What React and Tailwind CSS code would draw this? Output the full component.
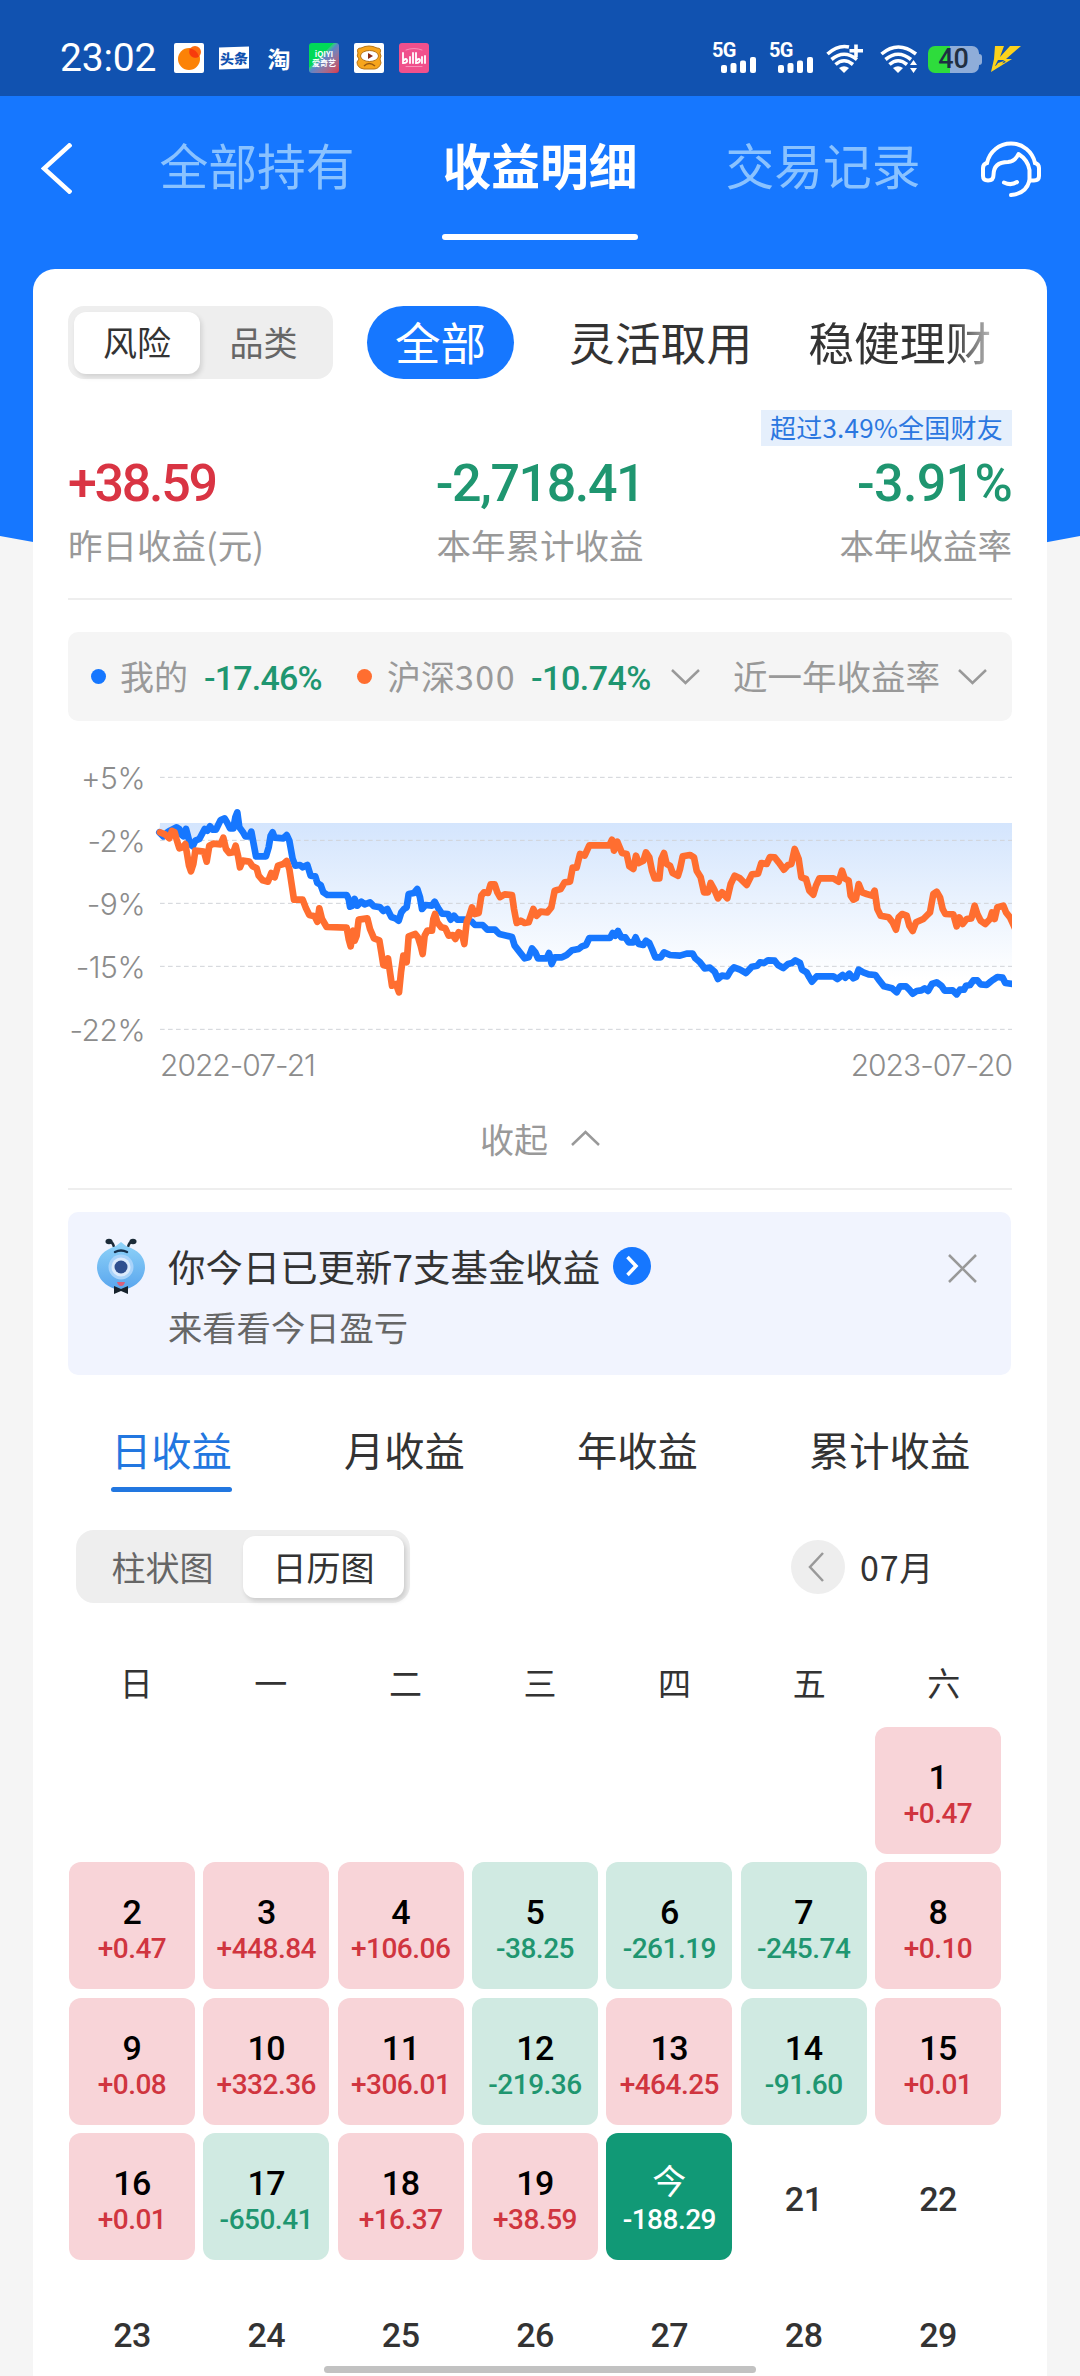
// ============================================================
//  App.jsx — fund earnings detail page (mobile)
// ============================================================
import React from 'react';

const TABS = ['全部持有', '收益明细', '交易记录'];

const Y_TICKS = ['+5%', '-2%', '-9%', '-15%', '-22%'];

const WEEKDAYS = ['日', '一', '二', '三', '四', '五', '六'];

// one entry per calendar cell, null = empty cell
const DAYS = [
  null, null, null, null, null, null, { d: 1, v: '+0.47' },
  { d: 2, v: '+0.47' }, { d: 3, v: '+448.84' }, { d: 4, v: '+106.06' }, { d: 5, v: '-38.25' },
  { d: 6, v: '-261.19' }, { d: 7, v: '-245.74' }, { d: 8, v: '+0.10' },
  { d: 9, v: '+0.08' }, { d: 10, v: '+332.36' }, { d: 11, v: '+306.01' }, { d: 12, v: '-219.36' },
  { d: 13, v: '+464.25' }, { d: 14, v: '-91.60' }, { d: 15, v: '+0.01' },
  { d: 16, v: '+0.01' }, { d: 17, v: '-650.41' }, { d: 18, v: '+16.37' }, { d: 19, v: '+38.59' },
  { d: '今', v: '-188.29', today: true }, { d: 21 }, { d: 22 },
  { d: 23 }, { d: 24 }, { d: 25 }, { d: 26 }, { d: 27 }, { d: 28 }, { d: 29 },
];

// chart series, viewBox units (3 per pixel)
const MINE =
  '-2,250 10,262 22,250 30,245 40,240 50,235 58,240 62,255 70,262 78,240 84,262 90,285 98,292 106,275 118,270 126,255 134,240 142,245 150,232 158,242 168,242 176,225 182,213 194,208 202,222 210,238 220,238 226,205 232,190 238,235 248,248 256,262 268,262 274,248 280,280 288,322 318,322 326,295 332,260 338,250 344,266 370,268 380,258 388,275 398,330 406,350 420,348 428,355 442,348 452,380 466,382 472,402 482,408 490,430 502,438 560,438 566,450 570,473 578,470 584,450 592,470 604,458 614,466 630,460 642,472 660,475 670,486 682,480 694,504 706,508 716,515 724,490 732,480 740,475 746,435 762,432 772,420 780,445 786,480 796,468 816,470 824,458 836,480 846,494 864,495 872,512 882,500 892,512 915,512 935,518 945,528 968,528 982,542 1005,542 1018,555 1040,560 1056,564 1064,590 1078,608 1094,628 1106,625 1116,598 1126,610 1134,628 1160,628 1167,612 1175,645 1184,625 1206,625 1220,618 1236,604 1256,600 1266,592 1278,588 1288,567 1350,567 1358,552 1366,560 1374,546 1384,565 1396,565 1406,580 1420,580 1427,565 1436,585 1450,588 1458,575 1468,582 1476,600 1486,625 1502,625 1512,610 1530,618 1560,620 1580,614 1598,614 1606,628 1620,640 1634,658 1650,656 1664,668 1674,690 1686,680 1702,682 1712,665 1722,655 1740,662 1758,672 1776,653 1792,650 1800,640 1812,642 1824,634 1844,635 1854,648 1870,657 1884,645 1896,642 1906,634 1920,642 1926,662 1940,670 1948,685 1956,698 1970,682 2020,682 2032,690 2048,678 2056,686 2068,674 2080,688 2088,684 2096,662 2110,670 2126,676 2146,678 2156,692 2172,712 2196,718 2210,730 2220,712 2238,712 2248,722 2258,734 2270,726 2284,724 2294,718 2304,726 2316,705 2330,700 2344,710 2354,725 2378,724 2390,736 2400,722 2412,722 2418,710 2430,708 2440,694 2452,694 2462,706 2480,708 2492,698 2500,692 2512,684 2528,686 2536,702 2570,706';

const CSI300 =
  '0,250 15,256 28,268 36,246 44,250 50,272 58,298 68,295 76,285 82,320 87,350 93,367 100,345 106,305 132,308 140,338 148,290 160,284 182,286 190,266 198,300 208,312 220,310 227,290 234,320 240,355 248,335 268,338 278,352 290,358 296,380 308,394 324,398 334,372 344,385 354,350 370,345 380,336 388,360 394,400 402,452 428,452 438,478 448,498 464,502 472,518 478,478 486,510 500,534 560,536 566,570 572,592 580,545 584,575 590,560 596,512 622,508 630,540 642,568 658,574 664,610 670,648 676,650 684,628 690,670 696,710 708,705 717,730 723,670 730,620 740,640 746,562 766,555 774,565 782,590 788,615 794,560 802,545 816,545 820,510 825,495 832,520 844,535 856,538 866,560 878,558 886,570 896,550 906,555 913,585 920,520 928,500 936,475 944,495 956,492 964,440 972,430 984,432 992,406 1004,406 1012,430 1020,444 1034,436 1056,438 1062,480 1070,522 1082,515 1094,522 1106,520 1120,480 1130,500 1142,488 1162,490 1174,475 1184,425 1202,420 1214,400 1230,398 1238,356 1250,356 1260,315 1274,320 1288,289 1348,289 1356,272 1362,305 1372,278 1386,312 1400,315 1408,352 1420,360 1428,320 1436,342 1450,335 1458,310 1468,325 1476,365 1484,388 1498,388 1504,330 1512,312 1520,345 1530,350 1538,372 1554,380 1560,360 1568,322 1590,318 1602,325 1610,365 1622,385 1632,430 1644,430 1652,402 1662,420 1674,448 1686,430 1702,448 1712,405 1724,380 1740,388 1760,408 1776,376 1794,374 1804,342 1820,345 1830,324 1844,325 1856,340 1872,362 1884,348 1894,345 1904,300 1916,330 1924,385 1938,390 1948,425 1960,437 1968,410 1978,388 2020,388 2036,398 2046,365 2054,388 2066,395 2072,440 2080,452 2088,448 2096,405 2106,430 2120,435 2136,440 2144,425 2152,480 2162,500 2186,505 2198,520 2208,542 2216,505 2226,495 2240,500 2248,530 2258,546 2268,520 2290,510 2302,498 2310,490 2320,435 2330,428 2340,445 2348,480 2356,495 2380,496 2390,532 2398,505 2408,525 2420,510 2434,508 2444,470 2452,495 2462,515 2476,525 2490,510 2496,490 2504,510 2512,475 2530,470 2538,490 2550,505 2566,540';

export default function App() {
  return (
    <div className="relative w-[1080px] h-[2376px] overflow-hidden bg-[#f5f5f5] font-['Noto_Sans_CJK_SC',sans-serif] text-[#333]">
      {/* curved blue backdrop */}
      <svg className="absolute left-0 top-0" width="1080" height="600" viewBox="0 0 1080 600">
        <path d="M0 0H1080V536Q540 640 0 536Z" fill="#1677ff" />
      </svg>
      <div className="relative flex flex-col">
        <StatusBar />
        <NavBar />
        <main className="mx-[33px] h-[2107px] rounded-t-[22px] bg-white px-[35px] pt-[37px]">
          <Filters />
          <Stats />
          <Legend />
          <Chart />
          <div className="flex h-[105px] items-center justify-center gap-[23px] border-b-2 border-[#eee] pt-[3px] text-[34px] text-[#999]">
            收起
            <Chevron up />
          </div>
          <Notice />
          <PeriodTabs />
          <Calendar />
        </main>
      </div>
      {/* home indicator */}
      <div className="absolute left-[324px] top-[2366px] h-[7px] w-[432px] rounded-full bg-[#c2c2c2]" />
    </div>
  );
}

function StatusBar() {
  return (
    <header className="flex h-[96px] items-start justify-between bg-[#1152b0] pl-[60px] pr-[59px] pt-[42px] text-white">
      <div className="flex h-[31px] items-center">
        <div className="w-[114px] pt-[2px] font-['Roboto',sans-serif] text-[39px] leading-[31px] tracking-[-0.2px]">23:02</div>
        <div className="flex items-center gap-[15px]">
          <svg width="30" height="30" viewBox="0 0 30 30">
            <rect width="30" height="30" rx="2" fill="#fff" />
            <circle cx="15" cy="16" r="11" fill="#fc8206" />
            <circle cx="21" cy="9" r="6" fill="#fb6b10" />
            <path d="M15.500 7.500A6 6 0 0 0 25 13.500A11 11 0 0 0 15.500 5.500Z" fill="#f73c0c" />
          </svg>
          <div className="flex h-[22px] w-[30px] -skew-y-2 items-center justify-center bg-white text-[14px] font-black leading-none text-[#1152b0]">
            头条
          </div>
          <div className="w-[30px] text-center text-[23px] font-bold leading-[28px]">淘</div>
          <div className="flex h-[30px] w-[30px] flex-col items-center justify-center rounded-[3px] bg-linear-to-br from-[#00d957] from-40% via-[#5a86c8] to-[#d8304a] text-[8px] font-bold leading-[9px]">
            <span>iQIYI</span>
            <span>爱奇艺</span>
          </div>
          <svg width="30" height="30" viewBox="0 0 30 30">
            <rect width="30" height="30" rx="2" fill="#fff" />
            <path d="M4 10Q2 5 7 5Q15 1 23 5Q28 5 26 10Q28 13 26 16L27 20Q25 26 20 26H10Q3 25 3 19L5 16Q2 13 4 10Z" fill="#f7a51c" stroke="#b87416" />
            <ellipse cx="15.500" cy="13" rx="9" ry="5.500" fill="#fff" stroke="#b87416" />
            <path d="M14 10L19 13L14 16Z" fill="#8a2c18" />
            <path d="M10 23Q15 18 21 23" fill="none" stroke="#9a5a10" strokeWidth="1.500" />
          </svg>
          <div className="flex h-[30px] w-[30px] items-center justify-center rounded-[3px] bg-[#f0508c]">
            <svg width="26" height="20" viewBox="0 0 26 20" fill="none" stroke="#fff" strokeWidth="1.800" strokeLinecap="round">
              <path d="M2 5V15Q7 15 6 12Q5 10 3 12M9 9V15M12 5V15M15 5V15Q19 15 19 12Q18 10 16 12M21 9V15M24 8V15" />
              <path d="M5 2Q13 -1 21 2M5 18.500H21" stroke="#f990b8" strokeWidth="1" />
            </svg>
          </div>
        </div>
      </div>
      <div className="flex h-[31px] items-start">
        <Signal />
        <Signal />
        <svg className="mt-[1px]" width="54" height="31" viewBox="0 0 54 31" fill="none" stroke="#fff" strokeWidth="3.600">
          <path d="M1.500 11Q12 1.500 23 4M5.500 16.500Q18 6 31 16.500M9.500 21.500Q18 14 27 21.500" />
          <path d="M13 25Q18 21.500 23 25L18 30Z" fill="#fff" stroke="none" />
          <path d="M30 1.500V14M23.500 7.700H37" />
        </svg>
        <svg className="mt-[1px]" width="48" height="31" viewBox="0 0 48 31" fill="none" stroke="#fff" strokeWidth="3.600">
          <path d="M1.500 11Q18 -3 36 11M5.500 16.500Q18 6 31 16.500M9.500 21.500Q18 14 27 21.500" />
          <path d="M13 25Q18 21.500 23 25L18 30Z" fill="#fff" stroke="none" />
          <path d="M30 22L33.500 17L37 22ZM30 25L33.500 30L37 25Z" fill="#fff" stroke="none" />
        </svg>
        <div className="mt-[4px] flex items-center">
          <div className="flex h-[27px] w-[51px] items-center justify-center rounded-[7px] bg-linear-to-r from-[#2edc3c] from-43% to-[#8fadd9] to-43% font-['Roboto',sans-serif] text-[27px] font-medium leading-none text-[#1f2f42]">
            40
          </div>
          <div className="h-[11px] w-[3px] rounded-r bg-[#8fadd9]" />
        </div>
        <svg className="ml-[9px] mt-[4px]" width="30" height="26" viewBox="0 0 30 26" fill="#fcd21c">
          <path d="M4 0H13L9 11L19 0H30L15 13H21L0 26L3 13Z" />
          <path d="M4 20L7 14H12L15 16Z" fill="#1152b0" />
          <path d="M2 24L7 17L13 15L10 19Z" fill="#fcd21c" />
        </svg>
      </div>
    </header>
  );
}

function Signal() {
  return (
    <div className="h-[31px] w-[57px]">
      <div className="h-[15px] font-['Roboto',sans-serif] text-[20px] font-bold leading-[17px] tracking-[-0.8px]">5G</div>
      <svg className="ml-[9px]" width="36" height="16" viewBox="0 0 36 16" fill="#fff">
        <rect x="0" y="8" width="6" height="8" rx="2" />
        <rect x="9.500" y="6" width="6" height="10" rx="2" />
        <rect x="19" y="3.500" width="6" height="12.500" rx="2" />
        <rect x="29" y="0" width="6" height="16" rx="2" />
      </svg>
    </div>
  );
}

function NavBar() {
  return (
    <nav className="flex h-[173px] items-start pl-[41px] pt-[45px] text-white">
      <svg className="mt-[2px]" width="31" height="51" viewBox="0 0 31 51" fill="none" stroke="#fff" strokeWidth="4.500">
        <path d="M30 1L3 25.500L30 50" />
      </svg>
      <div className="flex pl-[87px]">
        {TABS.map((t, i) => (
          <div key={t} className={i === 1 ? 'mx-[87px] flex w-[196px] flex-col items-center font-bold' : 'flex w-[196px] flex-col items-center text-[#8ac2ff]'}>
            <span className="h-[93px] whitespace-nowrap text-[48.8px] leading-[46px]">{t}</span>
            {i === 1 && <span className="h-[6px] w-[196px] rounded-full bg-white" />}
          </div>
        ))}
      </div>
      <svg className="ml-[60px] mt-[-1px]" width="60" height="58" viewBox="0 0 60 58" fill="none" stroke="#fff" strokeWidth="4" strokeLinecap="round" strokeLinejoin="round">
        <path d="M6 23A24.500 24.500 0 0 1 54 23" />
        <path d="M6 23Q2 24 2 28V36Q2 40.500 7 40.500Q12.500 40.500 12.500 35Q12.500 22 27 22Q34 21.500 37.500 14Q47 20 48.500 30V40.500H53Q58 40.500 58 36V28Q58 24 54 23" />
        <path d="M48.500 40.500Q45 54 30 55" />
        <path d="M23 42.500Q30 46 36 42" />
      </svg>
    </nav>
  );
}

function Filters() {
  return (
    <div className="flex h-[73px] items-center">
      <div className="flex h-[73px] w-[265px] flex-shrink-0 items-center rounded-[16px] bg-[#eee] p-[6px] text-[34px] leading-[50px]">
        <div className="flex h-[62px] w-[126px] items-center justify-center rounded-[12px] bg-white pb-[2px] shadow-[2px_3px_5px_rgba(0,0,0,0.12)]">风险</div>
        <div className="flex-1 pb-[2px] text-center text-[#666]">品类</div>
      </div>
      <div className="ml-[34px] flex h-[73px] w-[147px] flex-shrink-0 items-center justify-center rounded-full bg-[#1677ff] pb-[3px] text-[45.500px] text-white">全部</div>
      <div className="ml-[55px] flex-shrink-0 pb-[3px] text-[45.800px]">灵活取用</div>
      <div className="ml-[56px] flex-shrink-0 bg-linear-to-r from-[#333] from-78% to-[#bbb] bg-clip-text pb-[3px] text-[45.800px] text-transparent">稳健理财</div>
    </div>
  );
}

function Stats() {
  return (
    <div className="h-[221px] border-b-2 border-[#eee] pt-[31px]">
      <div className="flex h-[36px] justify-end">
        <span className="h-[36px] w-[251px] whitespace-nowrap bg-[#e5effc] text-center text-[26px] leading-[34px] tracking-[0.25px] text-[#2b77e0]">超过3.49%全国财友</span>
      </div>
      <div className="grid h-[72px] grid-cols-3 items-center pt-[3px] font-['Roboto',sans-serif] text-[52px] font-medium leading-[69px]">
        <span className="tracking-[-2.300px] text-[#d93443]">+38.59</span>
        <span className="text-center tracking-[-1.400px] text-[#1f9670]">-2,718.41</span>
        <span className="text-right tracking-[-0.700px] text-[#1f9670]">-3.91%</span>
      </div>
      <div className="grid h-[56px] grid-cols-3 items-center pb-[2px] text-[34.500px] text-[#999]">
        <span>昨日收益(元)</span>
        <span className="text-center">本年累计收益</span>
        <span className="text-right">本年收益率</span>
      </div>
    </div>
  );
}

function Legend() {
  return (
    <div className="mt-[32px] flex h-[89px] items-center rounded-[10px] bg-[#f5f5f5] pl-[23px] text-[34px] text-[#999]">
      <span className="h-[15px] w-[15px] rounded-full bg-[#1677ff]" />
      <span className="ml-[14px] pb-[2px]">我的</span>
      <span className="ml-[16px] w-[120px] pt-[4px] font-['Roboto',sans-serif] font-medium tracking-[-0.8px] text-[#1f9670]">-17.46%</span>
      <span className="ml-[33px] h-[15px] w-[15px] rounded-full bg-[#ff6e30]" />
      <span className="ml-[15px] flex w-[130px] whitespace-nowrap pb-[2px]">沪深<span className="tracking-[1.500px]">300</span></span>
      <span className="ml-[14px] w-[122px] pt-[4px] font-['Roboto',sans-serif] font-medium tracking-[-0.5px] text-[#1f9670]">-10.74%</span>
      <span className="ml-[18px]"><Chevron /></span>
      <span className="ml-[33px] w-[207px] whitespace-nowrap pb-[2px] text-[34.500px]">近一年收益率</span>
      <span className="ml-[18px]"><Chevron /></span>
    </div>
  );
}

function Chart() {
  return (
    <div className="mt-[25px] text-[#8c8c8c]">
      <div className="flex">
        <div className="flex w-[77px] flex-col whitespace-nowrap text-right font-['Inter',sans-serif] text-[30px] font-light leading-[65px] tracking-[-0.5px]">
          {Y_TICKS.map((t) => <span key={t} className="h-[63px]">{t}</span>)}
        </div>
        <svg className="ml-[10px]" width="857" height="315" viewBox="-15 -9 2571 945">
          <defs>
            <linearGradient id="fill" gradientUnits="userSpaceOnUse" x1="0" y1="222" x2="0" y2="690">
              <stop offset="0" stopColor="#d4e5fd" />
              <stop offset="1" stopColor="#fff" />
            </linearGradient>
          </defs>
          {/* area sits between the zero line and the blue series */}
          <polygon points={`0,222 ${MINE} 2570,222`} fill="url(#fill)" />
          <g stroke="#d0d3d8" strokeWidth="3" strokeDasharray="14 10">
            {[85, 274, 463, 652, 841].map((y) => <line key={y} x1="0" x2="2556" y1={y} y2={y} />)}
          </g>
          <g fill="none" strokeWidth="20" strokeLinejoin="round" strokeLinecap="round">
            <polyline points={MINE} stroke="#1677ff" />
            <polyline points={CSI300} stroke="#ff6e30" />
          </g>
        </svg>
      </div>
      <div className="-mt-[16px] ml-[92px] flex h-[40px] items-center justify-between font-['Inter',sans-serif] text-[30px] font-light tracking-[-1px]">
        <span>2022-07-21</span>
        <span>2023-07-20</span>
      </div>
    </div>
  );
}

function Notice() {
  return (
    <div className="mt-[22px] flex h-[163px] w-[943px] rounded-[10px] bg-[#f1f4fe] pl-[28px]">
      <Mascot />
      <div className="ml-[22px] flex flex-col pt-[26px]">
        <div className="flex h-[56px] items-center text-[37.400px]">
          你今日已更新7支基金收益
          <svg className="ml-[13px]" width="38" height="38" viewBox="0 0 38 38" fill="none">
            <circle cx="19" cy="19" r="19" fill="#1677ff" />
            <path d="M14.500 10L23 19L14.500 28" stroke="#fff" strokeWidth="3.500" />
          </svg>
        </div>
        <div className="h-[66px] text-[34.300px] leading-[64px] text-[#666]">来看看今日盈亏</div>
      </div>
      <svg className="ml-auto mr-[34px] mt-[42px]" width="29" height="29" viewBox="0 0 29 29" stroke="#999" strokeWidth="2.500">
        <path d="M1 1L28 28M28 1L1 28" />
      </svg>
    </div>
  );
}

function Mascot() {
  return (
    <svg className="mt-[26px]" width="50" height="56" viewBox="0 0 50 56">
      <defs>
        <linearGradient id="body" x1="0" y1="0" x2="0" y2="1">
          <stop offset="0" stopColor="#8fd3f8" />
          <stop offset="1" stopColor="#5aa6ee" />
        </linearGradient>
      </defs>
      <path d="M18 9Q17 4 13 3M32 9Q33 4 37 3" stroke="#1c2b38" strokeWidth="2.500" fill="none" />
      <ellipse cx="13" cy="3.500" rx="3.500" ry="2.800" fill="#1c2b38" />
      <ellipse cx="37" cy="3.500" rx="3.500" ry="2.800" fill="#1c2b38" />
      <path d="M25 4Q29 8 35 10Q49 16 49 30Q48 45 31 51H19Q2 45 1 30Q1 16 15 10Q21 8 25 4Z" fill="url(#body)" />
      <circle cx="25" cy="29" r="12.500" fill="#a9d3fa" />
      <circle cx="25" cy="29" r="9.500" fill="#dbeafc" />
      <circle cx="25" cy="29" r="6.500" fill="#2f4f8f" />
      <path d="M19 14Q25 11 31 14" stroke="#16324e" strokeWidth="2.500" fill="none" strokeLinecap="round" />
      <path d="M21 44H29Q28 48 25 48Q22 48 21 44Z" fill="#d8607c" />
      <path d="M18 48L25 51L32 48V56L25 53L18 56Z" fill="#17222c" />
    </svg>
  );
}

function PeriodTabs() {
  return (
    <div className="flex h-[117px] gap-[112px] pl-[43px] text-[40.300px] leading-[56px]">
      <div className="flex w-[121px] flex-col whitespace-nowrap pt-[46px] text-[#2277e0]">
        日收益
        <span className="mt-[10px] h-[5px] w-[121px] flex-shrink-0 rounded-full bg-[#2277e0]" />
      </div>
      <div className="w-[121px] whitespace-nowrap pt-[46px]">月收益</div>
      <div className="w-[121px] whitespace-nowrap pt-[46px]">年收益</div>
      <div className="-ml-[1px] whitespace-nowrap pt-[46px]">累计收益</div>
    </div>
  );
}

function Calendar() {
  return (
    <div>
      <div className="mt-[38px] flex h-[73px] items-center pl-[8px]">
        <div className="flex h-[73px] w-[334px] items-center rounded-[18px] bg-[#eee] p-[6px] text-[34px]">
          <div className="flex-1 pb-[1px] text-center text-[#666]">柱状图</div>
          <div className="flex h-[62px] w-[161px] items-center justify-center rounded-[12px] bg-white pb-[1px] shadow-[2px_3px_5px_rgba(0,0,0,0.15)]">日历图</div>
        </div>
        <div className="ml-[381px] flex h-[54px] w-[54px] items-center justify-center rounded-full bg-[#eee]">
          <svg className="mr-[4px]" width="16" height="30" viewBox="0 0 16 30" fill="none" stroke="#999" strokeWidth="2.500">
            <path d="M15 1L2 15L15 29" />
          </svg>
        </div>
        <div className="ml-[15px] text-[34px] tracking-[0.8px]">07月</div>
      </div>
      <div className="mt-[38px] grid h-[86px] w-[943px] grid-cols-7 items-center pb-[2px] pl-[1px] text-center text-[33px]">
        {WEEKDAYS.map((w) => <span key={w}>{w}</span>)}
      </div>
      <div className="grid w-[933px] auto-rows-[127px] grid-cols-7 gap-x-[8.400px] gap-y-[8.300px] pl-[1px]">
        {DAYS.map((day, i) => <DayCell key={i} day={day} />)}
      </div>
    </div>
  );
}

function DayCell({ day }) {
  if (!day) return <div />;

  if (!day.v) {
    return (
      <div className="flex items-center justify-center pt-[7px] font-['Roboto',sans-serif] text-[34px] font-medium tracking-[-0.5px]">
        {day.d}
      </div>
    );
  }

  const up = day.v.startsWith('+');
  const tone = day.today
    ? 'bg-[#119976] text-white'
    : up ? 'bg-[#f8d4d8] text-[#d0353f]' : 'bg-[#d0eae2] text-[#1f9670]';

  return (
    <div className={`flex flex-col items-center rounded-[12px] pt-[30px] font-['Roboto','Noto_Sans_CJK_SC',sans-serif] font-medium ${tone}`}>
      <span className={day.today ? 'h-[40px] text-[34px] font-normal leading-[38px]' : 'h-[40px] text-[34px] leading-[40px] tracking-[-0.5px] text-black'}>{day.d}</span>
      <span className="h-[34px] whitespace-nowrap text-[28px] leading-[34px] tracking-[-0.5px]">{day.v}</span>
    </div>
  );
}

function Chevron({ up }) {
  return (
    <svg width="29" height="16" viewBox="0 0 29 16" fill="none" stroke="#999" strokeWidth="2.500">
      <path d={up ? 'M1 15L14.500 2L28 15' : 'M1 1L14.500 14L28 1'} />
    </svg>
  );
}
